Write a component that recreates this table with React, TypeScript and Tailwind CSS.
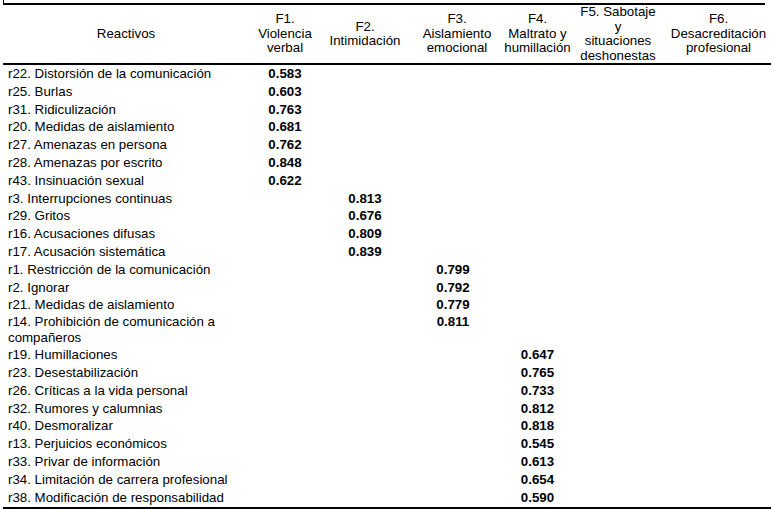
import React from "react";

const cols = "grid grid-cols-[246px_72px_88px_96px_65px_96px_105px]";

const headers: string[][] = [
  ["F1.", "Violencia", "verbal"],
  ["F2.", "Intimidación"],
  ["F3.", "Aislamiento", "emocional"],
  ["F4.", "Maltrato y", "humillación"],
  ["F5. Sabotaje", "y", "situaciones", "deshonestas"],
  ["F6.", "Desacreditación", "profesional"],
];

type Row = { label: string[]; f: number; v: string; h: string };

const top = "h-[17.8px] leading-[17.8px]";
const bottom = "h-[17.9px] leading-[17.9px]";

const rows: Row[] = [
  { label: ["r22. Distorsión de la comunicación"], f: 0, v: "0.583", h: top },
  { label: ["r25. Burlas"], f: 0, v: "0.603", h: top },
  { label: ["r31. Ridiculización"], f: 0, v: "0.763", h: top },
  { label: ["r20. Medidas de aislamiento"], f: 0, v: "0.681", h: top },
  { label: ["r27. Amenazas en persona"], f: 0, v: "0.762", h: top },
  { label: ["r28. Amenazas por escrito"], f: 0, v: "0.848", h: top },
  { label: ["r43. Insinuación sexual"], f: 0, v: "0.622", h: top },
  { label: ["r3. Interrupciones continuas"], f: 1, v: "0.813", h: top },
  { label: ["r29. Gritos"], f: 1, v: "0.676", h: top },
  { label: ["r16. Acusaciones difusas"], f: 1, v: "0.809", h: top },
  { label: ["r17. Acusación sistemática"], f: 1, v: "0.839", h: top },
  { label: ["r1. Restricción de la comunicación"], f: 2, v: "0.799", h: top },
  { label: ["r2. Ignorar"], f: 2, v: "0.792", h: top },
  { label: ["r21. Medidas de aislamiento"], f: 2, v: "0.779", h: top },
  {
    label: ["r14. Prohibición de comunicación a", "compañeros"],
    f: 2,
    v: "0.811",
    h: "h-[31.75px] leading-[16px]",
  },
  { label: ["r19. Humillaciones"], f: 3, v: "0.647", h: bottom },
  { label: ["r23. Desestabilización"], f: 3, v: "0.765", h: bottom },
  { label: ["r26. Críticas a la vida personal"], f: 3, v: "0.733", h: bottom },
  { label: ["r32. Rumores y calumnias"], f: 3, v: "0.812", h: bottom },
  { label: ["r40. Desmoralizar"], f: 3, v: "0.818", h: bottom },
  { label: ["r13. Perjuicios económicos"], f: 3, v: "0.545", h: bottom },
  { label: ["r33. Privar de información"], f: 3, v: "0.613", h: bottom },
  { label: ["r34. Limitación de carrera profesional"], f: 3, v: "0.654", h: bottom },
  { label: ["r38. Modificación de responsabilidad"], f: 3, v: "0.590", h: bottom },
];

// F3 loadings sit a little left of the header centre
const valueShift = ["", "", "pr-[8px]", "", "", ""];

export default function App() {
  return (
    <div className="w-[775px] h-[509px] overflow-hidden bg-white text-black text-[13.3px] font-['Liberation_Sans',Arial,sans-serif]">
      {/* remnant of the box above */}
      <div className="ml-[3px] h-[3px] w-[1px] bg-black" />
      <div className="ml-[3px] w-[762px] h-[2px] bg-black" />

      <div className="ml-[3px] w-[768px]">
        <div className={`${cols} h-[58px] leading-[14.5px]`}>
          <div className="flex items-center justify-center">Reactivos</div>
          {headers.map((lines, i) => (
            <div key={i} className="flex flex-col items-center justify-center whitespace-nowrap text-center">
              {lines.map((l) => (
                <span key={l}>{l}</span>
              ))}
            </div>
          ))}
        </div>
        <div className="h-[2px] bg-black" />

        {rows.map((r) => (
          <div key={r.label[0]} className={`${cols} ${r.h}`}>
            <div className="pl-[5px] whitespace-nowrap">
              {r.label.map((l) => (
                <div key={l}>{l}</div>
              ))}
            </div>
            {[0, 1, 2, 3, 4, 5].map((c) => (
              <div key={c} className={`text-center font-bold ${valueShift[c]}`}>
                {c === r.f ? r.v : ""}
              </div>
            ))}
          </div>
        ))}
        <div className="h-[2px] bg-black" />
      </div>
    </div>
  );
}
